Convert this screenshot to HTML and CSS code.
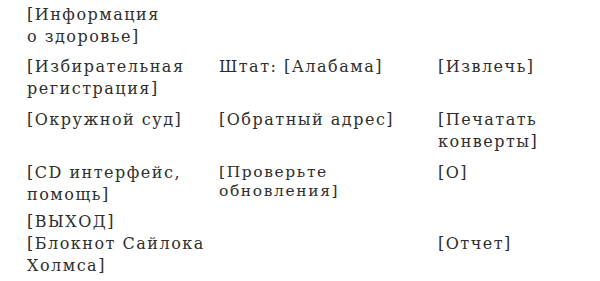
FILE: index.html
```html
<!DOCTYPE html>
<html lang="ru">
<head>
<meta charset="utf-8">
<title>Меню</title>
<link rel="stylesheet" href="styles.css">
</head>
<body>
<div class="menu">
  <div class="row gap8">
    <div class="cell">[Информация<br>о здоровье]</div>
    <div class="cell"></div>
    <div class="cell"></div>
  </div>
  <div class="row gap9">
    <div class="cell">[Избирательная<br>регистрация]</div>
    <div class="cell">Штат: [Алабама]</div>
    <div class="cell">[Извлечь]</div>
  </div>
  <div class="row gap9">
    <div class="cell">[Окружной суд]</div>
    <div class="cell">[Обратный адрес]</div>
    <div class="cell">[Печатать<br>конверты]</div>
  </div>
  <div class="row gap5">
    <div class="cell">[CD интерфейс,<br>помощь]</div>
    <div class="cell small">[Проверьте<br>обновления]</div>
    <div class="cell">[О]</div>
  </div>
  <div class="row">
    <div class="cell">[ВЫХОД]</div>
    <div class="cell"></div>
    <div class="cell"></div>
  </div>
  <div class="row">
    <div class="cell">[Блокнот Сайлока<br>Холмса]</div>
    <div class="cell"></div>
    <div class="cell">[Отчет]</div>
  </div>
</div>
</body>
</html>
```

FILE: styles.css
```css
html, body {
  margin: 0;
  padding: 0;
  background: #ffffff;
}

body {
  font-family: "DejaVu Serif", "Liberation Serif", serif;
  font-size: 16px;
  line-height: 22px;
  letter-spacing: 1.5px;
  color: #2e2e2e;
}

.menu {
  padding: 4px 0 0 27px;
}

.row {
  display: grid;
  grid-template-columns: 192px 219px 1fr;
}

.gap8 { margin-bottom: 8px; }
.gap9 { margin-bottom: 9px; }
.gap5 { margin-bottom: 5px; }

.cell {
  white-space: nowrap;
}

.small {
  font-size: 15.5px;
  line-height: 19px;
  letter-spacing: 1.6px;
  padding-top: 1px;
}
```
